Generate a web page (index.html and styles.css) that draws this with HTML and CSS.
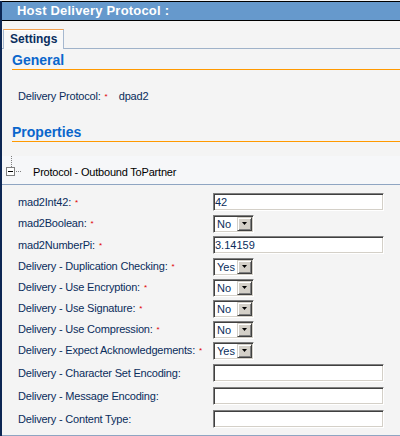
FILE: index.html
```html
<!DOCTYPE html>
<html>
<head>
<meta charset="utf-8">
<link rel="stylesheet" href="styles.css">
</head>
<body>
<div class="frame">
  <div class="titlebar">Host Delivery Protocol :</div>
  <div class="tabs"><div class="tab">Settings</div></div>
  <h2 class="section">General</h2>
  <div class="info"><span>Delivery Protocol:</span><span class="req">*</span><span class="val">dpad2</span></div>
  <h2 class="section props">Properties</h2>
  <div class="group">
    <div class="group-head">
      <svg class="tree" width="24" height="28" viewBox="0 0 24 28">
        <rect x="7" y="0" width="1" height="1" fill="#808080"/>
        <rect x="7" y="2" width="1" height="1" fill="#808080"/>
        <rect x="7" y="4" width="1" height="1" fill="#808080"/>
        <rect x="7" y="6" width="1" height="1" fill="#808080"/>
        <rect x="7" y="8" width="1" height="1" fill="#808080"/>
        <rect x="7" y="10" width="1" height="1" fill="#808080"/>
        <rect x="2.5" y="11.5" width="8" height="8" fill="#fff" stroke="#808080" stroke-width="1"/>
        <rect x="4" y="15" width="5" height="1" fill="#000"/>
        <rect x="12" y="15" width="1" height="1" fill="#808080"/>
        <rect x="14" y="15" width="1" height="1" fill="#808080"/>
        <rect x="16" y="15" width="1" height="1" fill="#808080"/>
      </svg>
      <span class="group-title">Protocol - Outbound ToPartner</span>
    </div>
    <div class="fields">
      <div class="row">
        <div class="lbl">mad2Int42:<span class="req">*</span></div>
        <input class="input" type="text" value="42" readonly>
      </div>
      <div class="row sel">
        <div class="lbl">mad2Boolean:<span class="req">*</span></div>
        <div class="select"><span class="select-val">No</span><span class="select-btn"><svg width="5" height="3" viewBox="0 0 5 3"><polygon points="0,0 5,0 2.5,3" fill="#000"/></svg></span></div>
      </div>
      <div class="row">
        <div class="lbl">mad2NumberPi:<span class="req">*</span></div>
        <input class="input" type="text" value="3.14159" readonly>
      </div>
      <div class="row sel">
        <div class="lbl">Delivery - Duplication Checking:<span class="req">*</span></div>
        <div class="select"><span class="select-val">Yes</span><span class="select-btn"><svg width="5" height="3" viewBox="0 0 5 3"><polygon points="0,0 5,0 2.5,3" fill="#000"/></svg></span></div>
      </div>
      <div class="row sel">
        <div class="lbl">Delivery - Use Encryption:<span class="req">*</span></div>
        <div class="select"><span class="select-val">No</span><span class="select-btn"><svg width="5" height="3" viewBox="0 0 5 3"><polygon points="0,0 5,0 2.5,3" fill="#000"/></svg></span></div>
      </div>
      <div class="row sel">
        <div class="lbl">Delivery - Use Signature:<span class="req">*</span></div>
        <div class="select"><span class="select-val">No</span><span class="select-btn"><svg width="5" height="3" viewBox="0 0 5 3"><polygon points="0,0 5,0 2.5,3" fill="#000"/></svg></span></div>
      </div>
      <div class="row sel">
        <div class="lbl">Delivery - Use Compression:<span class="req">*</span></div>
        <div class="select"><span class="select-val">No</span><span class="select-btn"><svg width="5" height="3" viewBox="0 0 5 3"><polygon points="0,0 5,0 2.5,3" fill="#000"/></svg></span></div>
      </div>
      <div class="row sel">
        <div class="lbl">Delivery - Expect Acknowledgements:<span class="req">*</span></div>
        <div class="select"><span class="select-val">Yes</span><span class="select-btn"><svg width="5" height="3" viewBox="0 0 5 3"><polygon points="0,0 5,0 2.5,3" fill="#000"/></svg></span></div>
      </div>
      <div class="row empty">
        <div class="lbl">Delivery - Character Set Encoding:</div>
        <input class="input" type="text" value="" readonly>
      </div>
      <div class="row empty">
        <div class="lbl">Delivery - Message Encoding:</div>
        <input class="input" type="text" value="" readonly>
      </div>
      <div class="row empty">
        <div class="lbl">Delivery - Content Type:</div>
        <input class="input" type="text" value="" readonly>
      </div>
    </div>
  </div>
</div>
</body>
</html>
```
FILE: styles.css
```css
* { box-sizing: border-box; }
body {
  margin: 0;
  padding-top: 1px;
  background: #f4f4f4;
  font-family: "Liberation Sans", Arial, sans-serif;
}
.frame {
  border-left: 2px solid #0c2653;
  min-height: 435px;
}
.titlebar {
  background: #6699cc;
  border-top: 1px solid #000;
  border-bottom: 1px solid #000;
  height: 20px;
  line-height: 18px;
  padding-left: 15px;
  color: #fff;
  font-weight: bold;
  font-size: 13px;
  letter-spacing: 0.2px;
}
.tabs {
  margin-top: 8px;
  padding-left: 1px;
  height: 20px;
  border-bottom: 1px solid #9fb2c9;
  display: flex;
}
.tab {
  height: 20px;
  line-height: 19px;
  padding: 0 6px;
  border: 1px solid #a6b8cf;
  border-top-color: #f0a050;
  border-bottom: none;
  background: #f8f8f8;
  box-shadow: inset 0 1px 0 #fff;
  font-size: 12px;
  font-weight: bold;
  color: #0b2f5e;
}
.section {
  margin: 3px 0 0 10px;
  padding-bottom: 1px;
  font-size: 14px;
  line-height: 16px;
  font-weight: bold;
  color: #0a66cc;
  border-bottom: 1px solid #ff9900;
}
.section.props { margin-top: 20px; }
.info {
  margin-top: 19px;
  padding-left: 16px;
  line-height: 14px;
  font-size: 11px;
  letter-spacing: -0.2px;
  color: #0a2d5c;
}
.req {
  color: #e00000;
  font-size: 8px;
  margin-left: 4px;
  letter-spacing: 0;
  vertical-align: 1px;
}
.val { margin-left: 11px; }
.group {
  margin-top: 14px;
  border-bottom: 1px solid #8fa5c2;
}
.group-head {
  height: 29px;
  border-bottom: 1px solid #8fa5c2;
  background: #f6f7f9;
  display: flex;
  align-items: flex-start;
}
.tree {
  display: block;
  flex: none;
  margin-left: 2px;
}
.group-title {
  margin-left: 5px;
  margin-top: 9px;
  line-height: 14px;
  font-size: 11px;
  letter-spacing: -0.2px;
  color: #000;
}
.fields { padding: 6px 0 5px; }
.row {
  display: flex;
  align-items: center;
  height: 22px;
}
.row.sel { height: 21px; }
.row.empty { height: 23px; }
.lbl {
  flex: none;
  width: 211px;
  padding-left: 16px;
  font-size: 11px;
  line-height: 14px;
  letter-spacing: -0.2px;
  color: #0a2d5c;
  white-space: nowrap;
}
.input {
  display: block;
  width: 171px;
  height: 18px;
  margin: 0;
  padding: 0 1px;
  border: 1px solid;
  border-color: #808080 #ffffff #ffffff #808080;
  box-shadow: inset 1px 1px 0 #404040, inset -1px -1px 0 #d4d0c8;
  background: #fff;
  font-family: "Liberation Sans", Arial, sans-serif;
  font-size: 11px;
  color: #0a2d5c;
  outline: none;
}
.select {
  display: flex;
  width: 41px;
  height: 18px;
  padding: 1px;
  border: 1px solid;
  border-color: #808080 #ffffff #ffffff #808080;
  box-shadow: inset 1px 1px 0 #404040, inset -1px -1px 0 #d4d0c8;
  background: #fff;
}
.select-val {
  flex: 1;
  padding-left: 2px;
  font-size: 11px;
  line-height: 14px;
  color: #0a2d5c;
}
.select-btn {
  flex: none;
  width: 15px;
  height: 14px;
  display: flex;
  align-items: center;
  justify-content: center;
  background: #d4d0c8;
  border: 1px solid;
  border-color: #d4d0c8 #404040 #404040 #d4d0c8;
  box-shadow: inset 1px 1px 0 #fff, inset -1px -1px 0 #808080;
}
.select-btn svg { display: block; }
```
